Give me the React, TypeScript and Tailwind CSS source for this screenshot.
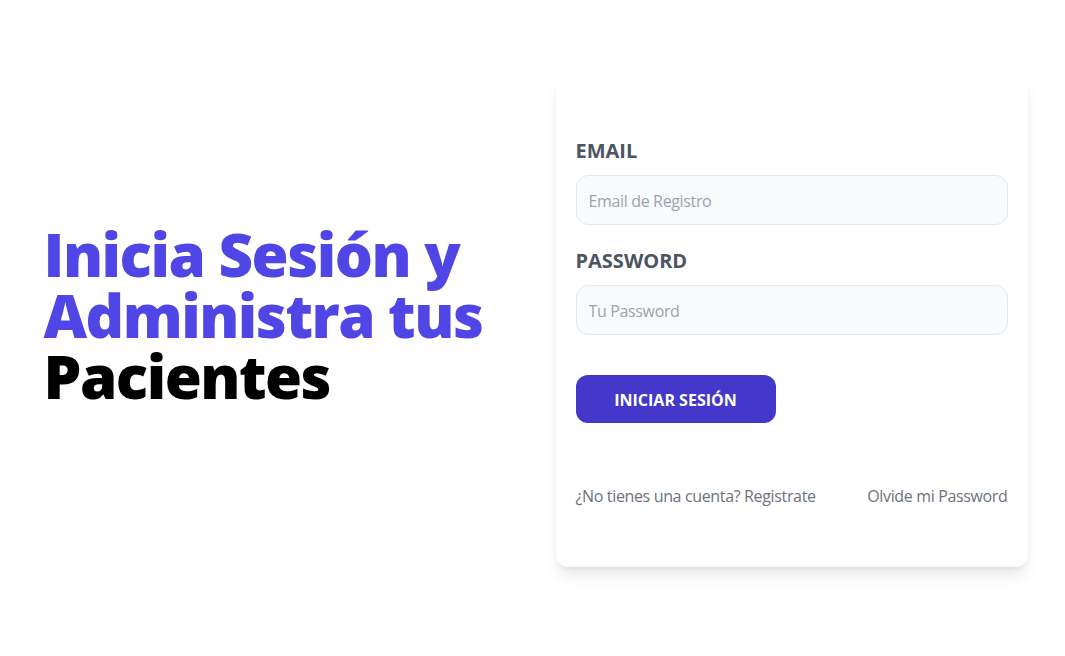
export default function App() {
    return (
        <div className="min-h-screen bg-white" style={{ fontFamily: '"Open Sans", "Noto Sans", sans-serif' }}>
            <main className="mx-auto max-w-[1024px] pl-5 pr-[17px] pt-[75px] grid grid-cols-2 gap-[43px] items-center">
                {/* Heading */}
                <div className="pl-[3px] pb-3">
                    <h1 className="text-[#4f46e5] font-black text-[60px] leading-[61px] tracking-[-1.5px]">
                        Inicia Sesión y Administra tus{" "}
                        <span className="text-black">Pacientes</span>
                    </h1>
                </div>

                {/* Login card */}
                <div className="rounded-xl bg-white shadow-lg px-5 pt-10 pb-[59px]">
                    <form>
                        <div className="my-5">
                            <label className="block pt-[2px] -mb-[2px] uppercase text-[#4b5563] text-xl font-bold leading-7">
                                Email
                            </label>
                            <input
                                type="email"
                                placeholder="Email de Registro"
                                className="mt-3 w-full rounded-xl border border-[#e5e7eb] bg-[#f9fafb] px-3 pt-[13px] pb-[11px] text-base leading-6 tracking-[-0.35px] placeholder:text-[#9ca3af] outline-none"
                            />
                        </div>
                        <div className="my-5">
                            <label className="block pt-[2px] -mb-[2px] uppercase text-[#4b5563] text-xl font-bold leading-7">
                                Password
                            </label>
                            <input
                                type="password"
                                placeholder="Tu Password"
                                className="mt-3 w-full rounded-xl border border-[#e5e7eb] bg-[#f9fafb] px-3 pt-[13px] pb-[11px] text-base leading-6 tracking-[-0.35px] placeholder:text-[#9ca3af] outline-none"
                            />
                        </div>
                        <button
                            type="submit"
                            className="mt-5 w-[200px] rounded-xl bg-[#4338ca] pt-[13px] pb-[11px] text-base leading-6 font-bold uppercase text-white"
                        >
                            Iniciar Sesión
                        </button>
                    </form>

                    <nav className="mt-[61px] flex justify-between text-base leading-6 tracking-[-0.35px] text-[#6b7280]">
                        <a href="#">¿No tienes una cuenta? Registrate</a>
                        <a href="#">Olvide mi Password</a>
                    </nav>
                </div>
            </main>
        </div>
    );
}
